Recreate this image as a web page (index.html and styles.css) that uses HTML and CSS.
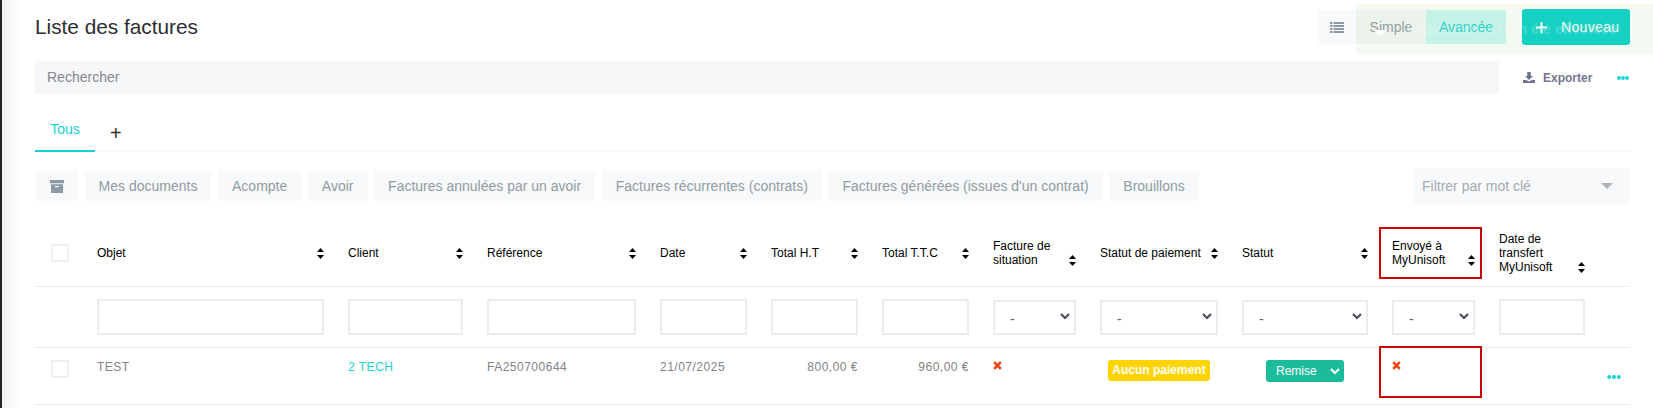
FILE: index.html
```html
<!DOCTYPE html>
<html lang="fr">
<head>
<meta charset="utf-8">
<title>Liste des factures</title>
<link rel="stylesheet" href="styles.css">
</head>
<body>
<div class="shell">
  <div class="edge"></div>
  <main class="main">
    <header class="top">
      <h1 class="title">Liste des factures</h1>
      <div class="seg">
        <span class="seg-icon"><svg width="14" height="11" viewBox="0 0 14 11"><path d="M0 0h2.5v2H0zM3.5 0H14v2H3.5zM0 3h2.5v2H0zM3.5 3H14v2H3.5zM0 6h2.5v2H0zM3.5 6H14v2H3.5zM0 9h2.5v2H0zM3.5 9H14v2H3.5z" fill="#8a99a3"/></svg></span>
        <span class="seg-item">Simple</span>
        <span class="seg-item seg-active">Avancée</span>
      </div>
      <button class="btn-new"><svg width="11" height="11" viewBox="0 0 11 11"><path d="M5.5 0v11M0 5.5h11" stroke="#fff" stroke-width="2"/></svg><span>Nouveau</span></button>
    </header>

    <div class="search-row">
      <div class="search">Rechercher</div>
      <div class="export"><svg width="12" height="11" viewBox="0 0 12 11"><path d="M4.2 0h3.6v4H10L6 8 2 4h2.2zM0 8h3.2L6 9.6 8.8 8H12v3H0z" fill="#6f7390"/></svg><span>Exporter</span></div>
      <svg class="dots" width="12" height="4" viewBox="0 0 12 4"><circle cx="2" cy="2" r="1.9"/><circle cx="6" cy="2" r="1.9"/><circle cx="10" cy="2" r="1.9"/></svg>
    </div>

    <nav class="tabs">
      <span class="tab">Tous</span>
      <span class="tab-add">+</span>
    </nav>

    <div class="filters">
      <span class="chip chip-icon"><svg width="14" height="13" viewBox="0 0 14 13"><path d="M0 0h14v3.2H0zM1 4.2h12V13H1z" fill="#8a99a3"/><path d="M5 6h4v1.2H5z" fill="#fff"/></svg></span>
      <span class="chip">Mes documents</span>
      <span class="chip">Acompte</span>
      <span class="chip">Avoir</span>
      <span class="chip">Factures annulées par un avoir</span>
      <span class="chip">Factures récurrentes (contrats)</span>
      <span class="chip">Factures générées (issues d'un contrat)</span>
      <span class="chip">Brouillons</span>
      <div class="keyword"><span>Filtrer par mot clé</span><i class="caret"></i></div>
    </div>

    <table class="grid">
      <colgroup>
        <col class="c-check"><col class="c-obj"><col class="c-client"><col class="c-ref"><col class="c-num"><col class="c-num"><col class="c-num"><col class="c-sit"><col class="c-pay"><col class="c-stat"><col class="c-sit"><col class="c-tr"><col class="c-act">
      </colgroup>
      <thead>
        <tr class="row-head">
          <th class="cell-check"><input class="check" type="checkbox"></th>
          <th><div class="th"><span>Objet</span><svg class="sort" width="7" height="11" viewBox="0 0 7 11"><path d="M3.5 0 7 4H0zM3.5 11 0 7h7z"/></svg></div></th>
          <th><div class="th"><span>Client</span><svg class="sort" width="7" height="11" viewBox="0 0 7 11"><path d="M3.5 0 7 4H0zM3.5 11 0 7h7z"/></svg></div></th>
          <th><div class="th"><span>Référence</span><svg class="sort" width="7" height="11" viewBox="0 0 7 11"><path d="M3.5 0 7 4H0zM3.5 11 0 7h7z"/></svg></div></th>
          <th><div class="th"><span>Date</span><svg class="sort" width="7" height="11" viewBox="0 0 7 11"><path d="M3.5 0 7 4H0zM3.5 11 0 7h7z"/></svg></div></th>
          <th><div class="th"><span>Total H.T</span><svg class="sort" width="7" height="11" viewBox="0 0 7 11"><path d="M3.5 0 7 4H0zM3.5 11 0 7h7z"/></svg></div></th>
          <th><div class="th"><span>Total T.T.C</span><svg class="sort" width="7" height="11" viewBox="0 0 7 11"><path d="M3.5 0 7 4H0zM3.5 11 0 7h7z"/></svg></div></th>
          <th><div class="th"><span>Facture de<br>situation</span><svg class="sort" width="7" height="11" viewBox="0 0 7 11"><path d="M3.5 0 7 4H0zM3.5 11 0 7h7z"/></svg></div></th>
          <th><div class="th"><span>Statut de paiement</span><svg class="sort" width="7" height="11" viewBox="0 0 7 11"><path d="M3.5 0 7 4H0zM3.5 11 0 7h7z"/></svg></div></th>
          <th><div class="th"><span>Statut</span><svg class="sort" width="7" height="11" viewBox="0 0 7 11"><path d="M3.5 0 7 4H0zM3.5 11 0 7h7z"/></svg></div></th>
          <th class="marked"><div class="th"><span>Envoyé à<br>MyUnisoft</span><svg class="sort" width="7" height="11" viewBox="0 0 7 11"><path d="M3.5 0 7 4H0zM3.5 11 0 7h7z"/></svg></div><i class="mark mark-head"></i></th>
          <th><div class="th"><span>Date de<br>transfert<br>MyUnisoft</span><svg class="sort" width="7" height="11" viewBox="0 0 7 11"><path d="M3.5 0 7 4H0zM3.5 11 0 7h7z"/></svg></div></th>
          <th></th>
        </tr>
      </thead>
      <tbody>
        <tr class="row-filter">
          <td></td>
          <td><input class="field" type="text"></td>
          <td><input class="field" type="text"></td>
          <td><input class="field" type="text"></td>
          <td><input class="field" type="text"></td>
          <td><input class="field" type="text"></td>
          <td><input class="field" type="text"></td>
          <td><div class="pick"><select class="field field-select"><option>-</option></select><svg class="pick-arrow" width="10" height="7" viewBox="0 0 10 7"><path d="M1 1l4 4 4-4" fill="none" stroke="#4a4f5a" stroke-width="2.2"/></svg></div></td>
          <td><div class="pick"><select class="field field-select"><option>-</option></select><svg class="pick-arrow" width="10" height="7" viewBox="0 0 10 7"><path d="M1 1l4 4 4-4" fill="none" stroke="#4a4f5a" stroke-width="2.2"/></svg></div></td>
          <td><div class="pick"><select class="field field-select"><option>-</option></select><svg class="pick-arrow" width="10" height="7" viewBox="0 0 10 7"><path d="M1 1l4 4 4-4" fill="none" stroke="#4a4f5a" stroke-width="2.2"/></svg></div></td>
          <td><div class="pick"><select class="field field-select"><option>-</option></select><svg class="pick-arrow" width="10" height="7" viewBox="0 0 10 7"><path d="M1 1l4 4 4-4" fill="none" stroke="#4a4f5a" stroke-width="2.2"/></svg></div></td>
          <td><input class="field" type="text"></td>
          <td></td>
        </tr>
        <tr class="row-data">
          <td class="cell-check"><input class="check" type="checkbox"></td>
          <td>TEST</td>
          <td><span class="link">2 TECH</span></td>
          <td>FA250700644</td>
          <td>21/07/2025</td>
          <td class="num">800,00 €</td>
          <td class="num">960,00 €</td>
          <td><svg class="cross" width="9" height="9" viewBox="0 0 9 9"><path d="M1.2 1.2l6.6 6.6M7.8 1.2 1.2 7.8" stroke="#e8430c" stroke-width="2.6"/></svg></td>
          <td class="center"><span class="badge">Aucun paiement</span></td>
          <td class="center"><span class="status">Remise<svg width="10" height="7" viewBox="0 0 10 7"><path d="M1 1l4 4 4-4" fill="none" stroke="#fff" stroke-width="2"/></svg></span></td>
          <td class="marked"><svg class="cross" width="9" height="9" viewBox="0 0 9 9"><path d="M1.2 1.2l6.6 6.6M7.8 1.2 1.2 7.8" stroke="#e8430c" stroke-width="2.6"/></svg><i class="mark mark-body"></i></td>
          <td></td>
          <td class="cell-act"><svg class="dots dots-row" width="14" height="4" viewBox="0 0 14 4"><circle cx="2.2" cy="2" r="2"/><circle cx="7" cy="2" r="2"/><circle cx="11.8" cy="2" r="2"/></svg></td>
        </tr>
      </tbody>
    </table>
  </main>
</div>

<div class="toast">
  <svg width="14" height="6" viewBox="0 0 14 6"><path d="M0 0h14L7 6z" fill="#fff"/></svg>
  <span>L'opération a bien été effectuée</span>
</div>
</body>
</html>
```

FILE: styles.css
```css
* { box-sizing: border-box; }

html, body {
  margin: 0;
  height: 408px;
  overflow: hidden;
  background: #fff;
  font-family: "Liberation Sans", Arial, sans-serif;
}

.shell {
  display: flex;
  height: 408px;
}

.edge {
  flex: none;
  width: 22px;
  border-left: 2px solid #26282b;
  background: linear-gradient(to right, #f2f2f2, #fff);
}

.main {
  flex: none;
  width: 1608px;
  padding-left: 13px;
}

/* Title bar */
.top {
  display: flex;
  align-items: center;
  height: 36px;
  margin-top: 9px;
}

.title {
  margin: 0 auto 0 0;
  font-size: 20.8px;
  font-weight: 400;
  color: #2c2e33;
}

.seg {
  display: flex;
  height: 34px;
  margin-right: 16px;
  background: #f7f9fb;
  border-radius: 2px;
  font-size: 14px;
  color: #8f9ca3;
}

.seg-icon {
  display: flex;
  align-items: center;
  padding-left: 12px;
  width: 38px;
}

.seg-item {
  display: flex;
  align-items: center;
  justify-content: center;
  width: 70px;
}

.seg-active {
  width: 80px;
  background: #cbf8f4;
  color: #15d2cc;
  border-radius: 0 2px 2px 0;
}

.btn-new {
  display: flex;
  align-items: center;
  gap: 14px;
  width: 108px;
  height: 36px;
  padding: 0 0 0 14px;
  border: 0;
  border-radius: 3px;
  background: #07d3cc;
  color: #fff;
  font: 400 14px "Liberation Sans", Arial, sans-serif;
  letter-spacing: 0.35px;
}

/* Search */
.search-row {
  display: flex;
  align-items: center;
  height: 33px;
  margin-top: 16px;
}

.search {
  flex: none;
  width: 1464px;
  height: 33px;
  padding-left: 12px;
  background: #f6f7f9;
  font-size: 14px;
  line-height: 33px;
  color: #85868f;
}

.export {
  display: flex;
  align-items: center;
  gap: 8px;
  margin-left: 24px;
  font-size: 12px;
  font-weight: 700;
  color: #73768f;
}

.dots {
  fill: #15d3d0;
}

.search-row .dots {
  margin-left: 25px;
}

/* Tabs */
.tabs {
  display: flex;
  height: 58px;
  border-bottom: 2px solid #f5fafc;
}

.tab {
  width: 60px;
  height: 58px;
  padding-top: 27px;
  border-bottom: 2px solid #15d3d0;
  text-align: center;
  font-size: 14px;
  color: #15d3d0;
}

.tab-add {
  margin-left: 15px;
  padding-top: 27px;
  font-size: 20px;
  line-height: 24px;
  color: #2a2a2a;
}

/* Filter chips */
.filters {
  display: flex;
  align-items: center;
  gap: 6.6px;
  height: 36px;
  margin-top: 16px;
  padding-left: 1px;
}

.chip {
  display: flex;
  align-items: center;
  height: 30px;
  padding: 0 14px;
  background: #f7f9fb;
  border-radius: 2px;
  font-size: 14px;
  color: #8f9ca3;
  white-space: nowrap;
}

.chip-icon {
  width: 42px;
}

.keyword {
  display: flex;
  align-items: center;
  justify-content: space-between;
  width: 216px;
  height: 36px;
  margin-left: auto;
  padding: 0 17px 0 8px;
  background: #f7f9fb;
  font-size: 14px;
  color: #a3abb1;
}

.caret {
  width: 0;
  height: 0;
  border-left: 6px solid transparent;
  border-right: 6px solid transparent;
  border-top: 6px solid #adb3b8;
}

/* Table */
.grid {
  width: 1595px;
  margin-top: 16px;
  table-layout: fixed;
  border-collapse: separate;
  border-spacing: 0;
  font-size: 12px;
}

.c-check { width: 50px; }
.c-obj { width: 251px; }
.c-client { width: 139px; }
.c-ref { width: 173px; }
.c-num { width: 111px; }
.c-sit { width: 107px; }
.c-pay { width: 142px; }
.c-stat { width: 150px; }
.c-tr { width: 110px; }
.c-act { width: 33px; }

.grid th,
.grid td {
  padding: 0 12px;
}

.row-head { height: 67px; }
.row-filter { height: 61px; }
.row-data { height: 57px; }

.row-head th {
  border-bottom: 1px solid #ececec;
  font-weight: 400;
  text-align: left;
  color: #000;
}

.th {
  display: flex;
  align-items: flex-end;
  justify-content: space-between;
  line-height: 14px;
}

.sort {
  flex: none;
  margin: 0 0.5px 1.5px 0;
  fill: #000;
}

.row-filter td {
  border-bottom: 1px solid #ececec;
  vertical-align: middle;
}

.row-data td {
  padding-top: 12px;
  border-bottom: 1px solid #ececec;
  vertical-align: top;
  line-height: 14px;
  letter-spacing: 0.5px;
  color: #7f8386;
}

.grid .cell-check {
  padding-left: 16px;
  padding-right: 0;
}

.check {
  display: block;
  width: 18px;
  height: 18px;
  margin: 0;
  appearance: none;
  border: 2px solid #efefef;
  background: #fff;
}

.field {
  display: block;
  width: 100%;
  height: 36px;
  margin: 0;
  border: 2px solid #ececec;
  border-radius: 0;
  background: #fff;
  outline: 0;
}

.pick {
  position: relative;
}

.field-select {
  height: 35px;
  padding: 3px 0 0 15px;
  appearance: none;
  font: 14px "Liberation Sans", Arial, sans-serif;
  color: #5c6066;
}

.pick-arrow {
  position: absolute;
  top: 13px;
  right: 6px;
}

.grid .num {
  padding-right: 12px;
  text-align: right;
}

.grid .center {
  text-align: center;
  letter-spacing: 0;
}

.link {
  color: #1ed3cd;
}

.cross {
  display: block;
  margin-top: 1px;
}

.badge {
  display: inline-block;
  width: 102px;
  height: 21px;
  border-radius: 3px;
  background: #ffd400;
  font-weight: 700;
  line-height: 21px;
  color: #fff;
}

.status {
  display: inline-flex;
  align-items: center;
  gap: 13px;
  width: 78px;
  height: 22px;
  padding-left: 10px;
  border-radius: 3px;
  background: #1abc9c;
  font-size: 12px;
  color: #fff;
}

.marked {
  position: relative;
}

.mark {
  position: absolute;
  left: -1px;
  width: 103px;
  border: 2px solid #cc0000;
  pointer-events: none;
}

.mark-head {
  top: 7px;
  height: 52px;
}

.mark-body {
  top: -2px;
  height: 52px;
}

.grid .cell-act {
  padding: 0;
  text-align: center;
  vertical-align: middle;
}

.dots-row {
  display: inline-block;
  vertical-align: middle;
}

/* Toast over the top right corner */
.toast {
  position: absolute;
  top: 4px;
  left: 1356px;
  display: flex;
  align-items: center;
  gap: 20px;
  width: 297px;
  height: 50px;
  padding-left: 17px;
  overflow: hidden;
  background: rgba(150, 200, 120, 0.1);
  font-size: 14px;
  font-weight: 700;
  color: rgba(255, 255, 255, 0.2);
  white-space: nowrap;
  pointer-events: none;
}

.toast svg {
  margin-top: 8px;
}
```
